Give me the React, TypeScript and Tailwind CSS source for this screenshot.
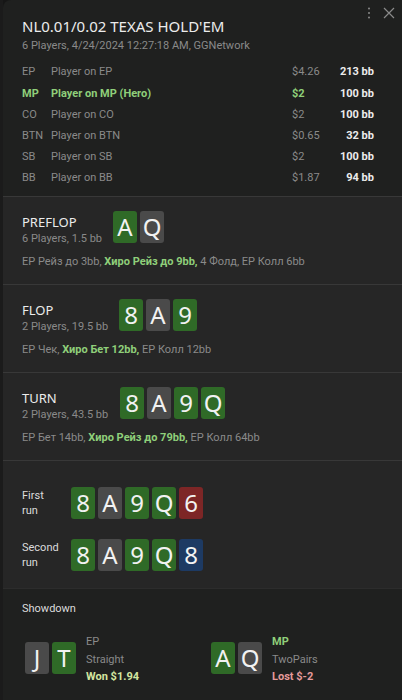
import React from 'react';

type Card = { r: string; c: 'g' | 'n' | 'r' | 'b' };

const cardBg: Record<Card['c'], string> = {
  g: 'bg-[#2f6a27]',
  n: 'bg-[#4a4a4a]',
  r: 'bg-[#7d2626]',
  b: 'bg-[#1d3a63]',
};

const noto = { fontFamily: '"Noto Sans", "Open Sans", sans-serif' };

const Cards = ({ cards }: { cards: Card[] }) => (
  <div className="flex gap-[3px]" style={noto}>
    {cards.map((c, i) => (
      <div
        key={i}
        className={`flex h-[32px] w-[24px] items-center justify-center rounded-[3px] text-[24px] leading-none text-[#f2f2f2] ${cardBg[c.c]}`}
      >
        {c.r}
      </div>
    ))}
  </div>
);

const players = [
  { pos: 'EP', name: 'Player on EP', usd: '$4.26', bb: '213 bb' },
  { pos: 'MP', name: 'Player on MP (Hero)', usd: '$2', bb: '100 bb', hero: true },
  { pos: 'CO', name: 'Player on CO', usd: '$2', bb: '100 bb' },
  { pos: 'BTN', name: 'Player on BTN', usd: '$0.65', bb: '32 bb' },
  { pos: 'SB', name: 'Player on SB', usd: '$2', bb: '100 bb' },
  { pos: 'BB', name: 'Player on BB', usd: '$1.87', bb: '94 bb' },
];

const Street = ({
  name,
  info,
  cards,
  before,
  hero,
  after,
  cardsLeft,
}: {
  name: string;
  info: string;
  cards: Card[];
  before: string;
  hero: string;
  after: string;
  cardsLeft: string;
}) => (
  <div className="h-[88px] shrink-0 border-t border-[#383838] bg-[#262626] px-[19px] pt-[14px]">
    <div className="flex items-start">
      <div className={`${cardsLeft} shrink-0 whitespace-nowrap pt-[2px]`}>
        <div className="text-[13px] leading-[18px] text-[#ececec]" style={noto}>
          {name}
        </div>
        <div className="text-[11px] leading-[16px] text-[#8a8a8a]">{info}</div>
      </div>
      <Cards cards={cards} />
    </div>
    <div className="mt-[7px] whitespace-nowrap text-[11px] leading-[16px] text-[#8a8a8a]">
      {before}
      <span className="font-bold text-[#8fcf7a]">{hero}</span>
      {after}
    </div>
  </div>
);

const g = (r: string): Card => ({ r, c: 'g' });
const n = (r: string): Card => ({ r, c: 'n' });

export default function App() {
  return (
    <div
      className="flex h-[700px] w-[402px] overflow-hidden bg-[#161616]"
      style={{ fontFamily: 'Roboto, "Noto Sans", sans-serif' }}
    >
      <div className="w-[3px] shrink-0 bg-[#1b1b1b]" />
      <div className="flex flex-1 flex-col overflow-hidden rounded-tl-[8px] bg-[#1f201f]">
        {/* header */}
        <div className="relative h-[196px] shrink-0 px-[19px] pt-[16px]">
          <div className="absolute right-[7px] top-[6px] flex items-center gap-[12px] text-[#8a8a8a]">
            <svg width="4" height="14" viewBox="0 0 4 14">
              <circle cx="2" cy="2.5" r="1" fill="currentColor" />
              <circle cx="2" cy="7" r="1" fill="currentColor" />
              <circle cx="2" cy="11.5" r="1" fill="currentColor" />
            </svg>
            <svg width="12" height="12" viewBox="0 0 12 12">
              <path d="M1 1 L11 11 M11 1 L1 11" stroke="currentColor" strokeWidth="1.2" />
            </svg>
          </div>
          <div className="text-[15px] leading-[20px] text-[#ececec]" style={noto}>
            NL0.01/0.02 TEXAS HOLD'EM
          </div>
          <div className="mt-[1px] text-[11px] leading-[18px] text-[#8a8a8a]">
            6 Players, 4/24/2024 12:27:18 AM, GGNetwork
          </div>
          <div className="mt-[7px] flex flex-col">
            {players.map((p) => (
              <div
                key={p.pos}
                className={`flex h-[21.2px] items-center text-[11px] ${p.hero ? 'font-bold text-[#8fcf7a]' : 'text-[#8a8a8a]'}`}
              >
                <div className="w-[29px]">{p.pos}</div>
                <div className="flex-1">{p.name}</div>
                <div className="w-[38px]">{p.usd}</div>
                <div className="w-[44px] text-right font-bold text-[#ececec]">{p.bb}</div>
                <div className="w-[9px]" />
              </div>
            ))}
          </div>
        </div>

        <Street
          name="PREFLOP"
          info="6 Players, 1.5 bb"
          cards={[g('A'), n('Q')]}
          before="EP Рейз до 3bb, "
          hero="Хиро Рейз до 9bb,"
          after=" 4 Фолд, EP Колл 6bb"
          cardsLeft="w-[91px]"
        />
        <Street
          name="FLOP"
          info="2 Players, 19.5 bb"
          cards={[g('8'), n('A'), g('9')]}
          before="EP Чек, "
          hero="Хиро Бет 12bb,"
          after=" EP Колл 12bb"
          cardsLeft="w-[97px]"
        />
        <Street
          name="TURN"
          info="2 Players, 43.5 bb"
          cards={[g('8'), n('A'), g('9'), g('Q')]}
          before="EP Бет 14bb, "
          hero="Хиро Рейз до 79bb,"
          after=" EP Колл 64bb"
          cardsLeft="w-[98px]"
        />

        {/* runs */}
        <div className="flex h-[128px] shrink-0 flex-col gap-[20px] border-t border-[#383838] bg-[#262626] px-[19px] pt-[26px]">
          <div className="flex items-center">
            <div className="w-[49px] text-[11px] leading-[15px] text-[#dcdcdc]">
              First
              <br />
              run
            </div>
            <Cards cards={[g('8'), n('A'), g('9'), g('Q'), { r: '6', c: 'r' }]} />
          </div>
          <div className="flex items-center">
            <div className="w-[49px] text-[11px] leading-[15px] text-[#dcdcdc]">
              Second
              <br />
              run
            </div>
            <Cards cards={[g('8'), n('A'), g('9'), g('Q'), { r: '8', c: 'b' }]} />
          </div>
        </div>

        {/* showdown */}
        <div className="flex-1 border-t border-[#2c2c2c] bg-[#1f201f] px-[19px] pt-[12px]">
          <div className="text-[11px] leading-[16px] text-[#dcdcdc]">Showdown</div>
          <div className="mt-[16px] flex pl-[3px]">
            <div className="flex w-[186px] items-start gap-[10px]">
              <div className="mt-[9px]">
                <Cards cards={[n('J'), g('T')]} />
              </div>
              <div className="text-[11px] leading-[17.5px]">
                <div className="text-[#8a8a8a]">EP</div>
                <div className="text-[#8a8a8a]">Straight</div>
                <div className="font-bold text-[#d4e6a0]">Won $1.94</div>
              </div>
            </div>
            <div className="flex items-start gap-[10px]">
              <div className="mt-[9px]">
                <Cards cards={[g('A'), n('Q')]} />
              </div>
              <div className="text-[11px] leading-[17.5px]">
                <div className="font-bold text-[#8fcf7a]">MP</div>
                <div className="text-[#8a8a8a]">TwoPairs</div>
                <div className="font-bold text-[#e59a9a]">Lost $-2</div>
              </div>
            </div>
          </div>
        </div>
      </div>
    </div>
  );
}
